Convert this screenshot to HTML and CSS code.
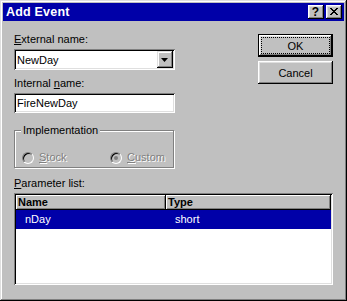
FILE: index.html
```html
<!DOCTYPE html>
<html>
  <head>
    <meta charset="utf-8" />
    <meta name="viewport" content="width=device-width, initial-scale=1" />
    <link rel="stylesheet" href="styles.css">
  </head>
  <body>
    <div class="window">
      <div class="titlebar">
        <span class="caption">Add Event</span>
        <div class="capbtns">
          <span class="capbtn help">?</span>
          <span class="capbtn close">
            <svg width="8" height="7" viewBox="0 0 8 7">
              <path d="M0 0h2v1h1v1h2v-1h1v-1h2v1h-1v1h-1v1h-1v1h1v1h1v1h1v1h-2v-1h-1v-1h-2v1h-1v1h-2v-1h1v-1h1v-1h1v-1h-1v-1h-1v-1h-1z" fill="#000" />
            </svg>
          </span>
        </div>
      </div>

      <div class="content">
        <div class="top">
          <div class="form">
            <div class="label"><u>E</u>xternal name:</div>
            <div class="combo">
              <span class="value">NewDay</span>
              <span class="drop">
                <svg width="7" height="4" viewBox="0 0 7 4"><path d="M0 0h7l-3.5 4z" fill="#000" /></svg>
              </span>
            </div>
            <div class="label">Internal <u>n</u>ame:</div>
            <div class="edit">FireNewDay</div>

            <div class="group">
              <span class="legend">Implementation</span>
              <div class="radios">
                <div class="radio stock"><span class="circle"></span><span class="disabled"><u>S</u>tock</span></div>
                <div class="radio"><span class="circle checked"></span><span class="disabled"><u>C</u>ustom</span></div>
              </div>
            </div>
          </div>

          <div class="buttons">
            <div class="btn default"><span class="focus">OK</span></div>
            <div class="btn">Cancel</div>
          </div>
        </div>

        <div class="label list-label"><u>P</u>arameter list:</div>
        <div class="list">
          <div class="head">
            <span class="col col-name">Name</span>
            <span class="col col-type">Type</span>
          </div>
          <div class="row selected">
            <span class="cell cell-name">nDay</span>
            <span class="cell">short</span>
          </div>
        </div>
      </div>
    </div>
  </body>
</html>
```

FILE: styles.css
```css
body {
  margin: 0;
  font-family: "Liberation Sans", Arial, sans-serif;
  font-size: 11px;
  color: #000;
  background: #c0c0c0;
}

* {
  box-sizing: border-box;
}

.window {
  width: 347px;
  height: 301px;
  padding: 3px;
  background: #c0c0c0;
  box-shadow: inset -1px -1px #000, inset 1px 1px #dfdfdf,
    inset -2px -2px #808080, inset 2px 2px #fff;
  display: flex;
  flex-direction: column;
}

.titlebar {
  height: 18px;
  background: #0000a8;
  color: #fff;
  display: flex;
  align-items: center;
  justify-content: space-between;
  padding: 0 2px 0 3px;
}

.caption {
  font-weight: bold;
  font-size: 12.5px;
  letter-spacing: 0.2px;
}

.capbtns {
  display: flex;
  gap: 2px;
}

.capbtn {
  width: 16px;
  height: 14px;
  background: #c0c0c0;
  color: #000;
  box-shadow: inset -1px -1px #000, inset 1px 1px #fff,
    inset -2px -2px #808080, inset 2px 2px #dfdfdf;
  display: flex;
  align-items: center;
  justify-content: center;
}

.help {
  font-weight: bold;
  font-size: 12px;
  line-height: 14px;
  padding: 0 1px 0 0;
}

.close svg {
  display: block;
  margin: 0 1px 1px 0;
}

.content {
  padding: 12px 11px 0 11px;
  display: flex;
  flex-direction: column;
}

.top {
  display: flex;
  justify-content: space-between;
}

.form {
  width: 161px;
}

.label {
  line-height: 13px;
  height: 13px;
  margin-bottom: 3px;
}

.combo,
.edit,
.list {
  background: #fff;
  box-shadow: inset 1px 1px #808080, inset -1px -1px #fff,
    inset 2px 2px #000, inset -2px -2px #dfdfdf;
}

.combo {
  height: 21px;
  padding: 2px;
  display: flex;
  align-items: center;
  margin-bottom: 7px;
}

.combo .value {
  flex: 1;
  padding-left: 1px;
}

.drop {
  width: 16px;
  height: 17px;
  background: #c0c0c0;
  box-shadow: inset -1px -1px #000, inset 1px 1px #dfdfdf,
    inset -2px -2px #808080, inset 2px 2px #fff;
  display: flex;
  align-items: center;
  justify-content: center;
}

.drop svg {
  display: block;
  margin-right: 1px;
}

.edit {
  height: 20px;
  line-height: 20px;
  padding: 0 3px;
}

.group {
  margin-top: 17px;
  width: 160px;
  height: 38px;
  border: 1px solid #808080;
  box-shadow: 1px 1px 0 #fff, inset 1px 1px 0 #fff;
}

.legend {
  display: inline-block;
  margin: -7px 0 0 6px;
  padding: 0 2px;
  line-height: 13px;
  background: #c0c0c0;
  vertical-align: top;
}

.radios {
  display: flex;
  margin-top: 8px;
  padding-left: 7px;
}

.radio {
  display: flex;
  align-items: center;
  gap: 5px;
  line-height: 13px;
}

.radio.stock {
  width: 88px;
}

.circle {
  width: 12px;
  height: 12px;
  border-radius: 50%;
  border: 1px solid;
  border-color: #808080 #fff #fff #808080;
  background: #c0c0c0;
  box-shadow: inset 1px 1px #000;
  display: flex;
  align-items: center;
  justify-content: center;
}

.circle.checked::after {
  content: "";
  width: 4px;
  height: 4px;
  border-radius: 50%;
  background: #808080;
}

.disabled {
  color: #808080;
  text-shadow: 1px 1px 0 #fff;
}

.buttons {
  width: 75px;
  padding-top: 1px;
  display: flex;
  flex-direction: column;
  gap: 4px;
}

.btn {
  height: 23px;
  background: #c0c0c0;
  box-shadow: inset -1px -1px #000, inset 1px 1px #fff,
    inset -2px -2px #808080, inset 2px 2px #dfdfdf;
  display: flex;
  align-items: center;
  justify-content: center;
}

.btn.default {
  border: 1px solid #000;
  padding: 3px;
}

.focus {
  width: 100%;
  height: 100%;
  outline: 1px dotted #000;
  display: flex;
  align-items: center;
  justify-content: center;
}

.list-label {
  margin-top: 9px;
}

.list {
  height: 92px;
  padding: 2px;
}

.head {
  display: flex;
  height: 15px;
}

.col {
  background: #c0c0c0;
  font-weight: bold;
  line-height: 15px;
  padding-left: 2px;
  box-shadow: inset -1px -1px #000, inset 1px 1px #fff,
    inset -2px -2px #808080;
}

.col-name {
  width: 150px;
}

.col-type {
  flex: 1;
}

.row {
  display: flex;
  height: 19px;
  line-height: 19px;
}

.row.selected {
  background: #0000a8;
  color: #fff;
}

.cell {
  padding-left: 9px;
}

.cell-name {
  width: 150px;
}
```
